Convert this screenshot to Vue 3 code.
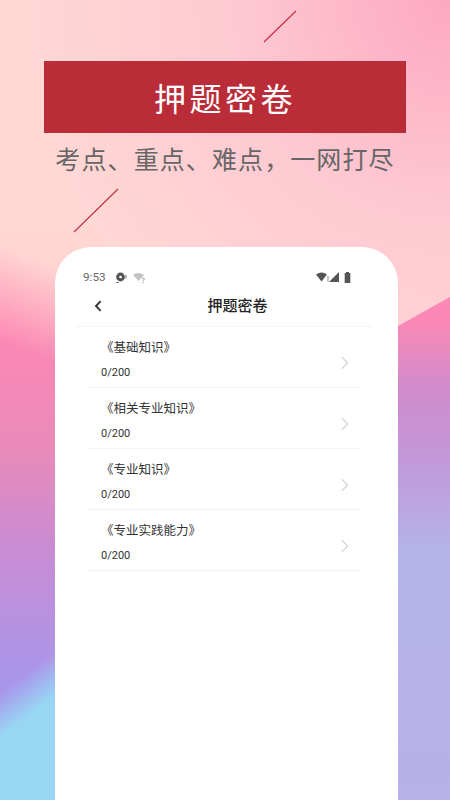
<script setup>
const items = [
  { name: '《基础知识》', progress: '0/200' },
  { name: '《相关专业知识》', progress: '0/200' },
  { name: '《专业知识》', progress: '0/200' },
  { name: '《专业实践能力》', progress: '0/200' },
]
</script>

<template>
  <div class="page">
    <svg class="bg" viewBox="0 0 450 800" preserveAspectRatio="none" aria-hidden="true">
      <defs>
        <radialGradient id="top" cx="450" cy="0" r="430" gradientUnits="userSpaceOnUse">
          <stop offset="0" stop-color="#fca8c2" />
          <stop offset="0.5" stop-color="#fec9d2" />
          <stop offset="1" stop-color="#ffd8d4" />
        </radialGradient>
        <linearGradient id="left" x1="0" y1="330" x2="0" y2="800" gradientUnits="userSpaceOnUse">
          <stop offset="0" stop-color="#fd88b4" />
          <stop offset="0.25" stop-color="#e98ab9" />
          <stop offset="0.47" stop-color="#c88cd4" />
          <stop offset="0.75" stop-color="#a896ea" />
          <stop offset="1" stop-color="#a896ea" />
        </linearGradient>
        <linearGradient id="leftFade" x1="0" y1="245" x2="-32" y2="330" gradientUnits="userSpaceOnUse">
          <stop offset="0" stop-color="#ffd6d2" />
          <stop offset="1" stop-color="#ffd6d2" stop-opacity="0" />
        </linearGradient>
        <linearGradient id="right" x1="0" y1="320" x2="0" y2="800" gradientUnits="userSpaceOnUse">
          <stop offset="0" stop-color="#fb88b6" />
          <stop offset="0.14" stop-color="#d18ccb" />
          <stop offset="0.28" stop-color="#c396d8" />
          <stop offset="0.48" stop-color="#b4b4ea" />
          <stop offset="1" stop-color="#b8b0e8" />
        </linearGradient>
        <linearGradient id="cyan" x1="-21" y1="709" x2="0" y2="737" gradientUnits="userSpaceOnUse">
          <stop offset="0" stop-color="#98d6f4" stop-opacity="0" />
          <stop offset="1" stop-color="#98d6f4" />
        </linearGradient>
      </defs>
      <rect width="450" height="800" fill="url(#top)" />
      <rect x="0" y="230" width="100" height="570" fill="url(#left)" />
      <rect x="0" y="230" width="100" height="570" fill="url(#leftFade)" />
      <rect x="0" y="650" width="100" height="150" fill="url(#cyan)" />
      <path d="M398 326 L450 297 L450 800 L398 800 Z" fill="url(#right)" />
      <line x1="296" y1="11" x2="264" y2="42" class="slash" />
      <line x1="118" y1="189" x2="74" y2="232" class="slash" />
    </svg>

    <header class="banner">
      <h1 class="banner-title">押题密卷</h1>
    </header>
    <p class="slogan">考点、重点、难点，一网打尽</p>

    <section class="phone">
      <div class="status">
        <div class="status-left">
          <span class="clock">9:53</span>
          <svg width="13" height="11" viewBox="0 0 13 11">
            <circle cx="5.5" cy="5" r="4.4" fill="#555" />
            <circle cx="5.5" cy="5" r="1.3" fill="#fff" />
            <path d="M1 10.5h3M11 3v3.5" stroke="#777" stroke-width="1" />
          </svg>
          <svg width="13" height="11" viewBox="0 0 13 11">
            <path d="M0 3 Q5 -1 11 3 L5.5 9 Z" fill="#c4c4c4" />
            <path d="M9 6.5 q2-1.4 2.4.4 q0 1-1.2 1.5v.6M10.2 10v1" fill="none" stroke="#888" stroke-width=".8" />
          </svg>
        </div>
        <div class="status-right">
          <svg width="13" height="10" viewBox="0 0 13 10">
            <path d="M0 2.4 Q5.5 -1.4 11 2.4 L5.5 9.5 Z" fill="#555" />
            <path d="M12 4v5.5" stroke="#888" stroke-width="1" />
          </svg>
          <svg width="10" height="10" viewBox="0 0 10 10"><path d="M10 0V10H0Z" fill="#555" /></svg>
          <svg class="battery" width="7" height="11" viewBox="0 0 7 11">
            <path d="M2 1V0h3v1h1.3v10H.7V1Z" fill="#555" />
          </svg>
        </div>
      </div>

      <div class="navbar">
        <svg class="back" width="10" height="14" viewBox="0 0 10 14">
          <path d="M7.6 2.2 3 7l4.6 4.8" fill="none" stroke="#333" stroke-width="1.9" />
        </svg>
        <span class="nav-title">押题密卷</span>
      </div>

      <ul class="list">
        <li v-for="item in items" :key="item.name" class="row">
          <div class="row-text">
            <span class="row-name">{{ item.name }}</span>
            <span class="row-progress">{{ item.progress }}</span>
          </div>
          <svg class="chev" width="8" height="14" viewBox="0 0 8 14">
            <path d="M1 1.3 6.6 7 1 12.7" fill="none" stroke="#b8b8b8" stroke-width="1" />
          </svg>
        </li>
      </ul>
    </section>
  </div>
</template>

<style>
html, body { margin: 0; padding: 0; }
</style>

<style scoped>
.page {
  position: relative;
  width: 450px;
  height: 800px;
  overflow: hidden;
  padding-top: 61px;
  box-sizing: border-box;
  font-family: "Noto Sans CJK SC", "Liberation Sans", sans-serif;
}
.bg { position: absolute; inset: 0; width: 450px; height: 800px; }
.slash { stroke: #bf2f41; stroke-width: 1.1; }
.banner {
  position: relative;
  margin: 0 44px;
  height: 72px;
  background: #bb2c39;
  display: flex;
  align-items: center;
  justify-content: center;
}
.banner-title {
  margin: 0;
  color: #fff;
  font-size: 32px;
  font-weight: 400;
  letter-spacing: 3.5px;
  line-height: 1;
}
.slogan {
  position: relative;
  margin: 7px 0 0;
  height: 36px;
  line-height: 36px;
  text-align: center;
  color: #666;
  font-size: 25px;
  letter-spacing: 1.1px;
  white-space: nowrap;
}
.phone {
  position: relative;
  margin: 71px 52px 0 55px;
  height: 553px;
  background: #fff;
  border-radius: 36px 36px 0 0;
  padding: 20px 26px 0 21px;
  box-sizing: border-box;
}
.status {
  display: flex;
  justify-content: space-between;
  align-items: center;
  height: 20px;
  padding: 0 21px 0 7px;
}
.status-left, .status-right { display: flex; align-items: center; }
.status-left { gap: 5px; }
.status-right { gap: 0; }
.battery { margin-left: 5px; }
.clock { font-family: Roboto, sans-serif; font-size: 11.7px; color: #666; margin-right: 4px; }
.navbar {
  position: relative;
  display: flex;
  align-items: center;
  justify-content: center;
  height: 35px;
  padding: 0 0 4px 27px;
  border-bottom: 1px solid #f5f5f5;
}
.back { position: absolute; left: 17px; top: 12px; }
.nav-title { font-size: 15px; font-weight: 500; color: #222; }
.list { list-style: none; margin: 0; padding: 0 11px 0 12px; }
.row {
  display: flex;
  align-items: flex-start;
  justify-content: space-between;
  height: 60px;
  box-sizing: content-box;
  border-bottom: 1px solid #f2f2f2;
  padding-left: 13px;
  padding-right: 12px;
}
.row-text { display: flex; flex-direction: column; gap: 8px; padding-top: 10px; }
.row-name { font-size: 12.5px; color: #333; line-height: 20px; }
.row-progress { font-family: Roboto, sans-serif; font-size: 11px; color: #333; line-height: 16px; }
.chev { margin-top: 29px; }
</style>
